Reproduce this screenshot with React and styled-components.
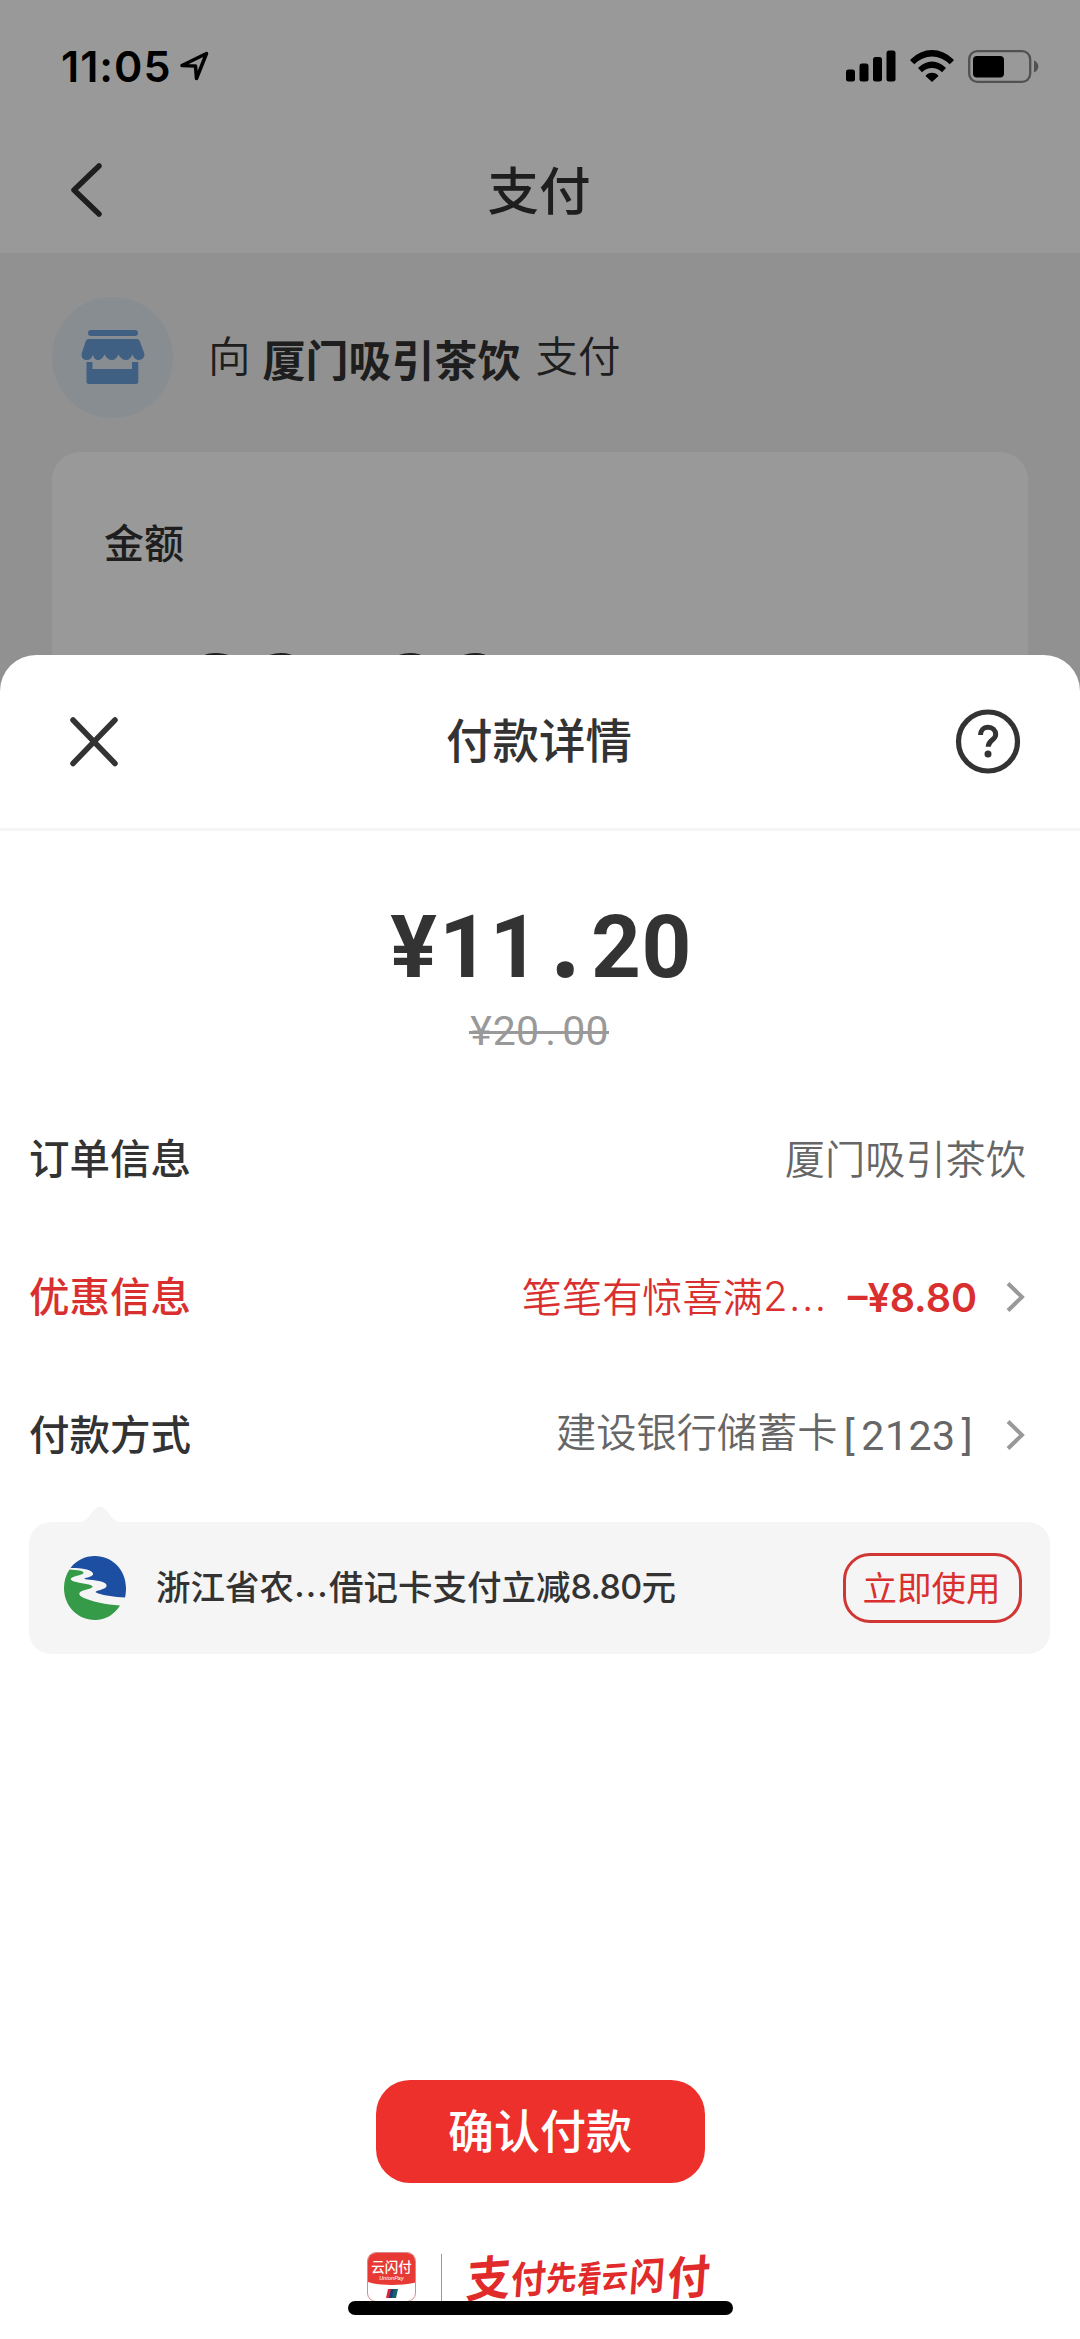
import React from 'react'
import styled, { createGlobalStyle } from 'styled-components'

const rows = [
  { label: '订单信息', value: '厦门吸引茶饮' },
  { label: '优惠信息', value: '笔笔有惊喜满', more: '2...', discount: '8.80', red: true, link: true },
  { label: '付款方式', value: '建设银行储蓄卡', card: '[2123]', link: true },
]

const slogan = [
  { char: '支', size: 48, width: 46, drop: 2 },
  { char: '付', size: 38, width: 34, drop: 5 },
  { char: '先', size: 33, width: 32, drop: 4 },
  { char: '看', size: 36, width: 24, drop: 3, narrow: 0.66 },
  { char: '云', size: 31, width: 26, drop: 1, narrow: 0.84 },
  { char: '闪', size: 38, width: 39, drop: 0 },
  { char: '付', size: 46, width: 44, drop: 0 },
]

const StoreIcon = () => (
  <svg width="64" height="54" viewBox="0 0 64 54" fill="#6ba1da">
    <rect x="7" y="0" width="50" height="6" rx="3" />
    <path d="M8 9h48q2 0 2.500 1.500L63 22.500C64.500 27 61.500 30 58 30c-3.500 0-5.500-2.500-6.500-5.500C50 28 48 30 45 30s-6-2-7.500-5.500C36 28 34 30 31 30s-6-2-7.500-5.500C22 28 20 30 17 30s-4.500-2.500-5-5.500C11 28 9 30 6 30c-4 0-6.500-3-5-7.500L5 10.500Q5.700 9 8 9z" />
    <path d="M5.500 32h6v7H51v-7h6.300v19.500q0 2.500-2.500 2.500H8q-2.500 0-2.500-2.500z" />
  </svg>
)

const Chevron = () => (
  <svg width="20" height="32" viewBox="0 0 20 32" fill="none" stroke="#999" strokeWidth="4">
    <path d="M2 2.500L16 16 2 29.500" />
  </svg>
)

const BankLogo = () => (
  <svg width="62" height="64" viewBox="0 0 62 64">
    <path d="M6.500 12C12 4.500 21 0 31 0c17.500 0 31 14 31 32 0 3.500-.3 6.500-1 9.500C50 41 41 39.500 34.500 37.500c-4-1.300-3.500-2 0-3C40 33 43 31.500 42.500 29c-.5-3-8-4.500-17-5.300-6.500-.6-7-1.200-1.500-2.200C29 20 31 18 27 15.300 22.500 12.500 13 12 6.500 12z" fill="#1c4fa2" />
    <path d="M5.500 13.500C13 14 20 14.500 19.500 17c-.5 1.700-6 2.500-9.500 3.700-4.500 1.500-4 3.300 0 4.700 5.500 1.800 17 2.300 18.500 4.800 1 2-6 3-10 4.500-4.500 2-4.500 4.500 1.500 7.300 8 3.700 22 6.500 36 7.500C50.500 58.500 41.500 64 31 64 13.500 64 0 50 0 32c0-7 2-13.500 5.500-18.500z" fill="#369b49" />
  </svg>
)

const App = () => {
  return (
    <Screen>
      <GlobalStyle />
      <TopArea>
        <StatusBar>
          <Clock>11:05</Clock>
          <svg width="30" height="30" viewBox="0 0 30 30" fill="none" stroke="#000" strokeWidth="3.500" strokeLinejoin="round">
            <path d="M2 14.500L26.500 2.500 16.500 27.500 15.500 15z" />
          </svg>
          <StatusIcons>
            <svg width="50" height="32" viewBox="0 0 50 32">
              <rect x="0" y="19.500" width="9" height="12" rx="2.500" />
              <rect x="13.500" y="13.500" width="9" height="18" rx="2.500" />
              <rect x="27" y="7" width="9" height="24.500" rx="2.500" />
              <rect x="40.500" y="0.500" width="9" height="31" rx="2.500" />
            </svg>
            <svg width="44" height="32" viewBox="0 0 44 32">
              <path d="M0.500 9.500Q10 0 22 0t21.500 9.500l.2 1-4 3.700Q31.500 6.500 22 6.500T4.300 14.200l-4-3.700z" />
              <path d="M8 18Q14.500 11.500 22 11.500T36 18l-4 4.200Q27.500 18 22 18t-10 4.200z" />
              <path d="M15.500 26Q18 22.700 22 22.700t6.500 3.300L22 32z" />
            </svg>
            <svg width="71" height="33" viewBox="0 0 71 33">
              <rect x="1.200" y="1.200" width="61" height="30.600" rx="8" fill="none" stroke="#888" strokeWidth="2.300" />
              <rect x="5" y="6" width="31" height="21.500" rx="4" />
              <path d="M66 10.500q4.300 1.800 4.300 6t-4.300 6z" fill="#888" />
            </svg>
          </StatusIcons>
        </StatusBar>
        <NavBar>
          <svg width="34" height="54" viewBox="0 0 34 54" fill="none" stroke="#333" strokeWidth="5.500" strokeLinecap="round" strokeLinejoin="round">
            <path d="M29 3L4 27 29 51" />
          </svg>
          <NavTitle>支付</NavTitle>
        </NavBar>
      </TopArea>
      <Payee>
        <StoreBadge><StoreIcon /></StoreBadge>
        <PayeeText>向</PayeeText>
        <PayeeName>厦门吸引茶饮</PayeeName>
        <PayeeText>支付</PayeeText>
      </Payee>
      <AmountCard>
        <AmountLabel>金额</AmountLabel>
        <AmountValue>
          {'20.00'.split('').map((c, i) => <Digit key={i} $width={64.7}>{c}</Digit>)}
        </AmountValue>
      </AmountCard>
      <Mask />

      <Sheet>
        <SheetHeader>
          <svg width="50" height="52" viewBox="0 0 50 52" fill="none" stroke="#333" strokeWidth="5.500" strokeLinecap="round">
            <path d="M4 5L46 48.500M46 5L4 48.500" />
          </svg>
          <SheetTitle>付款详情</SheetTitle>
          <svg width="66" height="66" viewBox="0 0 66 66" fill="none" stroke="#333">
            <circle cx="33" cy="33.500" r="29.500" strokeWidth="5.200" />
            <path d="M25.500 27c0-4.500 3-7.800 7.500-7.800s7.700 3 7.700 7.200c0 5.600-7.500 5.800-7.500 12.300" strokeWidth="5" />
            <circle cx="33" cy="46" r="3.500" fill="#333" stroke="none" />
          </svg>
        </SheetHeader>

        <Price>
          {'¥11.20'.split('').map((c, i) => <Digit key={i} $width={50.6} $dot={c === '.'}>{c}</Digit>)}
        </Price>
        <OldPrice>
          {'¥20.00'.split('').map((c, i) => <Digit key={i} $width={23.2}>{c}</Digit>)}
        </OldPrice>

        <Rows>
          {rows.map((row) => (
            <Row key={row.label}>
              <RowLabel $red={row.red}>{row.label}</RowLabel>
              <RowValue $red={row.red} $raised={row.card}>
                {row.value}
                {row.more && <More>{row.more}</More>}
                {row.card && (
                  <CardNo>{row.card.split('').map((c, i) => <Digit key={i} $width={23.6}>{c}</Digit>)}</CardNo>
                )}
              </RowValue>
              {row.discount && <Discount>–¥{row.discount}</Discount>}
              {row.link && <Chevron />}
            </Row>
          ))}
        </Rows>

        <Tip>
          <TipArrow width="44" height="18" viewBox="0 0 44 18">
            <path d="M0 18Q7 17 13 9 22-6 31 9q6 8 13 9z" fill="#f5f5f5" />
          </TipArrow>
          <BankLogo />
          <TipText>浙江省农<Ellipsis>...</Ellipsis>借记卡支付立减<TipNum>8.80</TipNum>元</TipText>
          <UseButton>立即使用</UseButton>
        </Tip>

        <Footer>
          <ConfirmButton>确认付款</ConfirmButton>
          <Brand>
            <AppLogo>
              <LogoTop>
                <LogoName>云闪付</LogoName>
                <LogoSub>UnionPay</LogoSub>
              </LogoTop>
              <svg width="14" height="9" viewBox="0 0 14 9">
                <path d="M3 0h4L5 9H1z" fill="#d7263d" />
                <path d="M6 0h4L8 9H4z" fill="#1d3b7a" />
                <path d="M9 0h4l-2 9H7z" fill="#17636b" />
              </svg>
            </AppLogo>
            <Divider />
            <Slogan>
              {slogan.map((s, i) => (
                <SloganChar key={i} $size={s.size} $width={s.width} $drop={s.drop} $narrow={s.narrow}>{s.char}</SloganChar>
              ))}
            </Slogan>
          </Brand>
        </Footer>
        <HomeBar />
      </Sheet>
    </Screen>
  )
}

export default App

const GlobalStyle = createGlobalStyle`
  * {
    box-sizing: border-box;
  }
  body {
    margin: 0;
    background: #fff;
  }
  svg {
    display: block;
    flex-shrink: 0;
  }
`
const Screen = styled.div`
  position: relative;
  width: 1080px;
  height: 2339px;
  overflow: hidden;
  background: #f2f2f2;
  color: #333;
  font-family: "Noto Sans CJK SC", sans-serif;
  white-space: nowrap;
`
const TopArea = styled.div`
  height: 253px;
  background: #fff;
`
const StatusBar = styled.div`
  display: flex;
  align-items: center;
  height: 132px;
  padding: 0 41px 0 61px;
`
const Clock = styled.div`
  width: 119px;
  color: #000;
  font-family: Inter, sans-serif;
  font-size: 43px;
  font-weight: 600;
  letter-spacing: 1px;
`
const StatusIcons = styled.div`
  display: flex;
  align-items: center;
  gap: 14px;
  margin-left: auto;
`
const NavBar = styled.div`
  display: flex;
  align-items: center;
  height: 116px;
  padding: 0 70px;
`
const NavTitle = styled.div`
  flex: 1;
  margin-right: 36px;
  padding-bottom: 4px;
  text-align: center;
  font-size: 51.500px;
  font-weight: 500;
  line-height: 60px;
`
const Payee = styled.div`
  display: flex;
  align-items: center;
  height: 199px;
  padding: 9px 52px 0;
`
const StoreBadge = styled.div`
  display: flex;
  align-items: center;
  justify-content: center;
  width: 121px;
  height: 121px;
  margin-right: 35px;
  border-radius: 50%;
  background: #e3ebf2;
`
const PayeeText = styled.div`
  font-size: 42.500px;
  font-weight: 350;
  line-height: 60px;
  padding-bottom: 7px;
`
const PayeeName = styled.div`
  margin: 2px 15px 0 12px;
  font-size: 43px;
  font-weight: 700;
  line-height: 60px;
`
const AmountCard = styled.div`
  height: 300px;
  margin: 0 52px;
  padding: 61px 52px 0;
  border-radius: 28px;
  background: #fff;
`
const AmountLabel = styled.div`
  font-size: 40px;
  font-weight: 500;
  line-height: 56px;
`
const AmountValue = styled.div`
  display: flex;
  padding: 71px 0 0 80px;
  font-family: Roboto, sans-serif;
  font-size: 110px;
  font-weight: 700;
  line-height: 110px;
`
const Digit = styled.span`
  display: inline-block;
  width: ${({ $width }) => $width}px;
  text-align: center;
  ${({ $dot }) => $dot && `
    font-family: "Open Sans", sans-serif;
    font-size: 100px;
  `}
`
const Mask = styled.div`
  position: absolute;
  inset: 0;
  background: rgba(0, 0, 0, .4);
`
const Sheet = styled.div`
  position: absolute;
  left: 0;
  right: 0;
  bottom: 0;
  display: flex;
  flex-direction: column;
  height: 1684px;
  border-radius: 36px 36px 0 0;
  background: #fff;
`
const SheetHeader = styled.div`
  display: flex;
  align-items: center;
  height: 176px;
  padding: 0 59px 2px 69px;
  border-bottom: 3px solid #f5f5f5;
`
const SheetTitle = styled.div`
  flex: 1;
  padding: 0 0 5px 4px;
  text-align: center;
  font-size: 46.500px;
  font-weight: 500;
  line-height: 60px;
`
const Price = styled.div`
  display: flex;
  align-items: baseline;
  justify-content: center;
  height: 100px;
  margin-top: 63px;
  font-family: Roboto, sans-serif;
  font-size: 87px;
  font-weight: 700;
  line-height: 88px;
`
const OldPrice = styled.div`
  align-self: center;
  position: relative;
  display: flex;
  height: 44px;
  margin: 15px 2px 0 0;
  color: #999;
  font-family: Roboto, sans-serif;
  font-size: 41px;
  font-weight: 400;
  line-height: 44px;
  &::after {
    content: '';
    position: absolute;
    left: 0;
    right: 0;
    top: 22px;
    height: 3px;
    background: #999;
  }
`
const Rows = styled.div`
  padding: 37px 54px 0 29px;
`
const Row = styled.div`
  display: flex;
  align-items: center;
  height: 138px;
`
const RowLabel = styled.div`
  margin-right: auto;
  color: ${({ $red }) => ($red ? '#d9302f' : '#333')};
  font-size: 40.500px;
  font-weight: 500;
  line-height: 60px;
  padding-bottom: 5px;
`
const RowValue = styled.div`
  display: flex;
  align-items: center;
  color: ${({ $red }) => ($red ? '#d9302f' : '#666')};
  font-size: 40.200px;
  font-weight: 350;
  line-height: 60px;
  padding-bottom: ${({ $raised }) => ($raised ? 10 : 4)}px;
`
const More = styled.span`
  padding-top: 3px;
  font-family: Inter, sans-serif;
  letter-spacing: 1.500px;
`
const CardNo = styled.span`
  display: flex;
  margin: 12px 27px 0 0;
  font-family: Roboto, sans-serif;
  font-size: 41px;
  font-weight: 400;
`
const Discount = styled.div`
  margin: 2px 29px 0 20px;
  color: #d9302f;
  font-family: Inter, sans-serif;
  font-size: 39.500px;
  font-weight: 600;
  line-height: 60px;
`
const Tip = styled.div`
  position: relative;
  display: flex;
  align-items: center;
  height: 132px;
  margin: 18px 30px 0 29px;
  padding: 0 28px 0 35px;
  border-radius: 22px;
  background: #f5f5f5;
`
const TipArrow = styled.svg`
  position: absolute;
  left: 49px;
  top: -17px;
`
const TipText = styled.div`
  display: flex;
  margin-left: 30px;
  font-size: 34.500px;
  font-weight: 500;
  line-height: 50px;
  padding-bottom: 4px;
`
const Ellipsis = styled.span`
  width: 35px;
  text-align: center;
  letter-spacing: 1px;
  font-family: Inter, sans-serif;
`
const TipNum = styled.span`
  padding-top: 2px;
  font-family: Inter, sans-serif;
  font-size: 34px;
  letter-spacing: -.6px;
`
const UseButton = styled.button`
  width: 179px;
  height: 70px;
  margin-left: auto;
  padding: 0 2px 5px 0;
  border: 3px solid #d03634;
  border-radius: 27px;
  background: transparent;
  color: #d9302f;
  font-family: inherit;
  font-size: 34.500px;
  font-weight: 400;
  line-height: 50px;
`
const Footer = styled.div`
  display: flex;
  flex-direction: column;
  align-items: center;
  margin-top: auto;
  padding-bottom: 36px;
`
const ConfirmButton = styled.button`
  width: 329px;
  height: 103px;
  padding: 0 0 7px;
  border: none;
  border-radius: 34px;
  background: #ed302c;
  color: #fff;
  font-family: inherit;
  font-size: 46px;
  font-weight: 500;
  line-height: 60px;
`
const Brand = styled.div`
  display: flex;
  align-items: center;
  height: 52px;
  margin: 68px 2px 0 0;
`
const AppLogo = styled.div`
  display: flex;
  flex-direction: column;
  align-items: center;
  gap: 4px;
  width: 49px;
  height: 50px;
  overflow: hidden;
  border: 1px solid #dc8a90;
  border-radius: 9px;
  background: #fff;
`
const LogoTop = styled.div`
  width: 56px;
  height: 32px;
  padding-top: 5px;
  border-radius: 0 0 50% 50% / 0 0 6px 6px;
  background: #e83a34;
  color: #fff;
  text-align: center;
`
const LogoName = styled.div`
  font-size: 13.500px;
  font-weight: 500;
  line-height: 16px;
`
const LogoSub = styled.div`
  font-family: Roboto, sans-serif;
  font-size: 6px;
  font-style: italic;
  line-height: 7px;
`
const Divider = styled.div`
  width: 1px;
  height: 47px;
  margin: 0 24px 0 25px;
  background: #999;
`
const Slogan = styled.div`
  display: flex;
  align-items: center;
  padding-bottom: 6px;
  color: #e12a2a;
  font-weight: 700;
`
const SloganChar = styled.span`
  display: flex;
  justify-content: center;
  width: ${({ $width }) => $width}px;
  padding-top: ${({ $drop }) => $drop}px;
  font-size: ${({ $size }) => $size}px;
  line-height: 44px;
  transform: skewX(-8deg) rotate(-4deg) scaleX(${({ $narrow }) => $narrow || 0.92});
`
const HomeBar = styled.div`
  position: absolute;
  left: 348px;
  bottom: 24px;
  width: 385px;
  height: 14px;
  border-radius: 7px;
  background: #000;
`
